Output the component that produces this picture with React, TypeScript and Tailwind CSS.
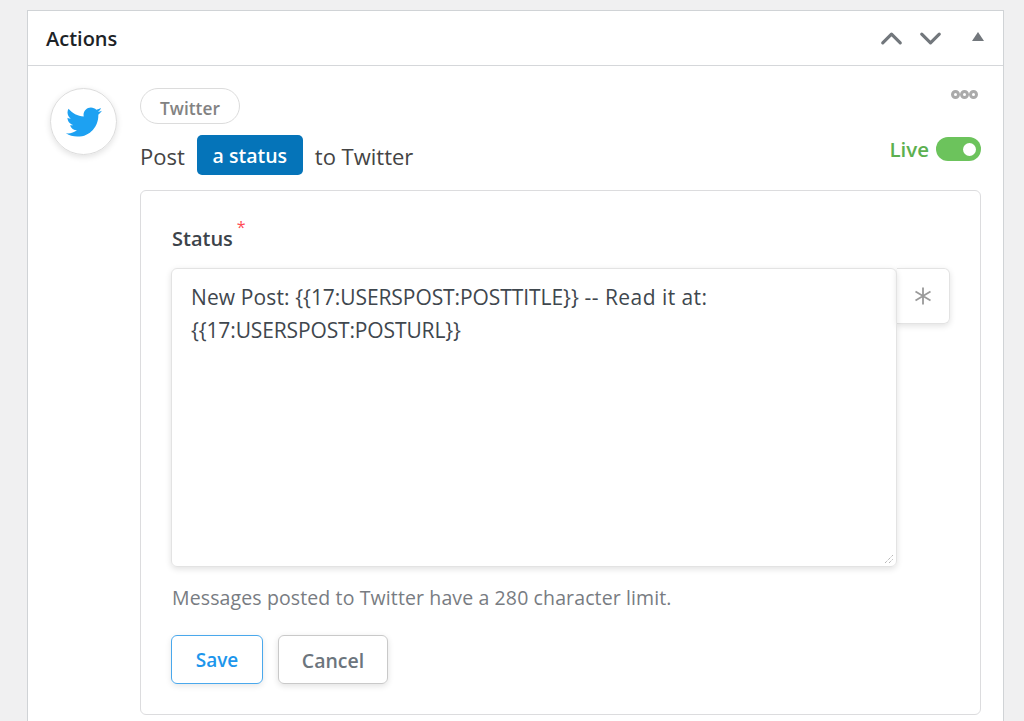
import { ChevronDown, ChevronUp } from "lucide-react";
import { FaTwitter } from "react-icons/fa";

export default function App() {
    return (
        <div
            className="h-[721px] overflow-hidden bg-[#f0f0f1] pt-[10px] pl-[27px] pr-[20px]"
            style={{ fontFamily: '"Open Sans", "Noto Sans", sans-serif' }}
        >
            <div className="h-[760px] border border-[#d0d3d6] bg-white">
                <div className="flex h-[55px] items-center justify-between border-b border-[#d5d7da] pl-[18px] pr-[19px]">
                    <h2 className="pt-[2px] text-[20px] font-semibold text-[#1d2327]">
                        Actions
                    </h2>
                    <div className="flex items-center text-[#72777c]">
                        <ChevronUp size={35} strokeWidth={2.2} />
                        <ChevronDown size={35} strokeWidth={2.2} className="ml-[4px]" />
                        <svg width="12" height="9" viewBox="0 0 12 9" className="mb-[3px] ml-[24px]">
                            <path d="M6 0 L12 9 L0 9 Z" fill="#72777c" />
                        </svg>
                    </div>
                </div>

                <div className="flex pl-[22px] pr-[22px] pt-[22px]">
                    <div className="flex h-[67px] w-[67px] shrink-0 items-center justify-center rounded-full border border-[#dcdcdc] shadow-[0_2px_6px_rgba(0,0,0,0.12)]">
                        <FaTwitter size={36} color="#1da1f2" />
                    </div>

                    <div className="ml-[23px] flex-1">
                        <div className="flex items-start justify-between">
                            <div>
                                <div className="flex h-[36px] w-[100px] items-center justify-center rounded-full border border-[#dcdcdc] pt-[6px] text-[17.3px] leading-[24px] font-semibold text-[#828282]">
                                    Twitter
                                </div>
                                <div className="mt-[11px] flex items-center text-[22px] text-[#444]">
                                    <span className="pt-[2px]">Post</span>
                                    <span className="ml-[12px] flex h-[40px] w-[106px] items-center justify-center rounded-[5px] bg-[#0574b9] pt-[2px] text-[19.5px] font-semibold text-white">
                                        a status
                                    </span>
                                    <span className="ml-[12px] pt-[2px]">to Twitter</span>
                                </div>
                            </div>
                            <div className="flex flex-col items-end">
                                <div className="mr-[3px] mt-[2px] flex">
                                    <span className="h-[9px] w-[9px] rounded-full border-[3px] border-[#aaa]" />
                                    <span className="h-[9px] w-[9px] rounded-full border-[3px] border-[#aaa]" />
                                    <span className="h-[9px] w-[9px] rounded-full border-[3px] border-[#aaa]" />
                                </div>
                                <div className="mt-[35px] flex items-center">
                                    <span className="text-[20.5px] font-semibold text-[#5cb050]">
                                        Live
                                    </span>
                                    <span className="ml-[7px] flex h-[24px] w-[45px] items-center justify-end rounded-full bg-[#6cc35c] pr-[5px]">
                                        <span className="h-[13px] w-[13px] rounded-full bg-white" />
                                    </span>
                                </div>
                            </div>
                        </div>

                        <div className="mt-[15px] h-[525px] rounded-[6px] border border-[#dcdcde] pl-[30px] pt-[33px]">
                            <div className="flex pl-[1px] text-[20px] font-semibold text-[#3c434a]">
                                <span>Status</span>
                                <span className="ml-[4px] mt-[-9px] text-[16px] font-normal text-[#ff4b55]">
                                    *
                                </span>
                            </div>

                            <div className="mt-[14px] flex items-start">
                                <div className="relative h-[299px] w-[726px] rounded-[6px] border border-[#e3e3e3] px-[19px] pt-[12px] text-[21px] leading-[33px] tracking-[0.12px] text-[#3f474e] shadow-[0_2px_6px_rgba(0,0,0,0.12)]">
                                    <div>
                                        New Post:{" "}
                                        <span className="tracking-[-0.07px]">{"{{17:USERSPOST:POSTTITLE}}"}</span>
                                        <span className="tracking-[0.45px]"> -- Read it at:</span>
                                    </div>
                                    <div className="tracking-[-0.13px]">{"{{17:USERSPOST:POSTURL}}"}</div>
                                    <svg width="10" height="10" viewBox="0 0 10 10" className="absolute bottom-[2px] right-[2px]">
                                        <path d="M1 9 L9 1 M5 9 L9 5" stroke="#999" strokeWidth="1" strokeDasharray="1 1" />
                                    </svg>
                                </div>
                                <div className="flex h-[56px] w-[53px] items-center justify-center rounded-r-[6px] border border-l-0 border-[#e3e3e3] shadow-[0_2px_6px_rgba(0,0,0,0.12)]">
                                    <svg width="20" height="20" viewBox="0 0 20 20">
                                        <path d="M10 1.5 V18.5 M2.5 5.5 L17.5 14.5 M17.5 5.5 L2.5 14.5" stroke="#9a9a9a" strokeWidth="1.8" />
                                    </svg>
                                </div>
                            </div>

                            <p className="mt-[16px] pl-[1px] text-[19.5px] leading-[29px] tracking-[0.12px] text-[#787c82]">
                                Messages posted to Twitter have a 280 character limit.
                            </p>

                            <div className="mt-[23px] flex gap-[15px]">
                                <button className="h-[49px] w-[92px] rounded-[6px] border border-[#4aa8ec] pt-[2px] text-[19px] font-semibold text-[#1d96ec] shadow-[0_2px_6px_rgba(0,0,0,0.1)]">
                                    Save
                                </button>
                                <button className="h-[49px] w-[110px] rounded-[6px] border border-[#c9c9c9] pt-[2px] text-[19.5px] font-semibold text-[#6c757d] shadow-[0_2px_6px_rgba(0,0,0,0.12)]">
                                    Cancel
                                </button>
                            </div>
                        </div>
                    </div>
                </div>
            </div>
        </div>
    );
}
